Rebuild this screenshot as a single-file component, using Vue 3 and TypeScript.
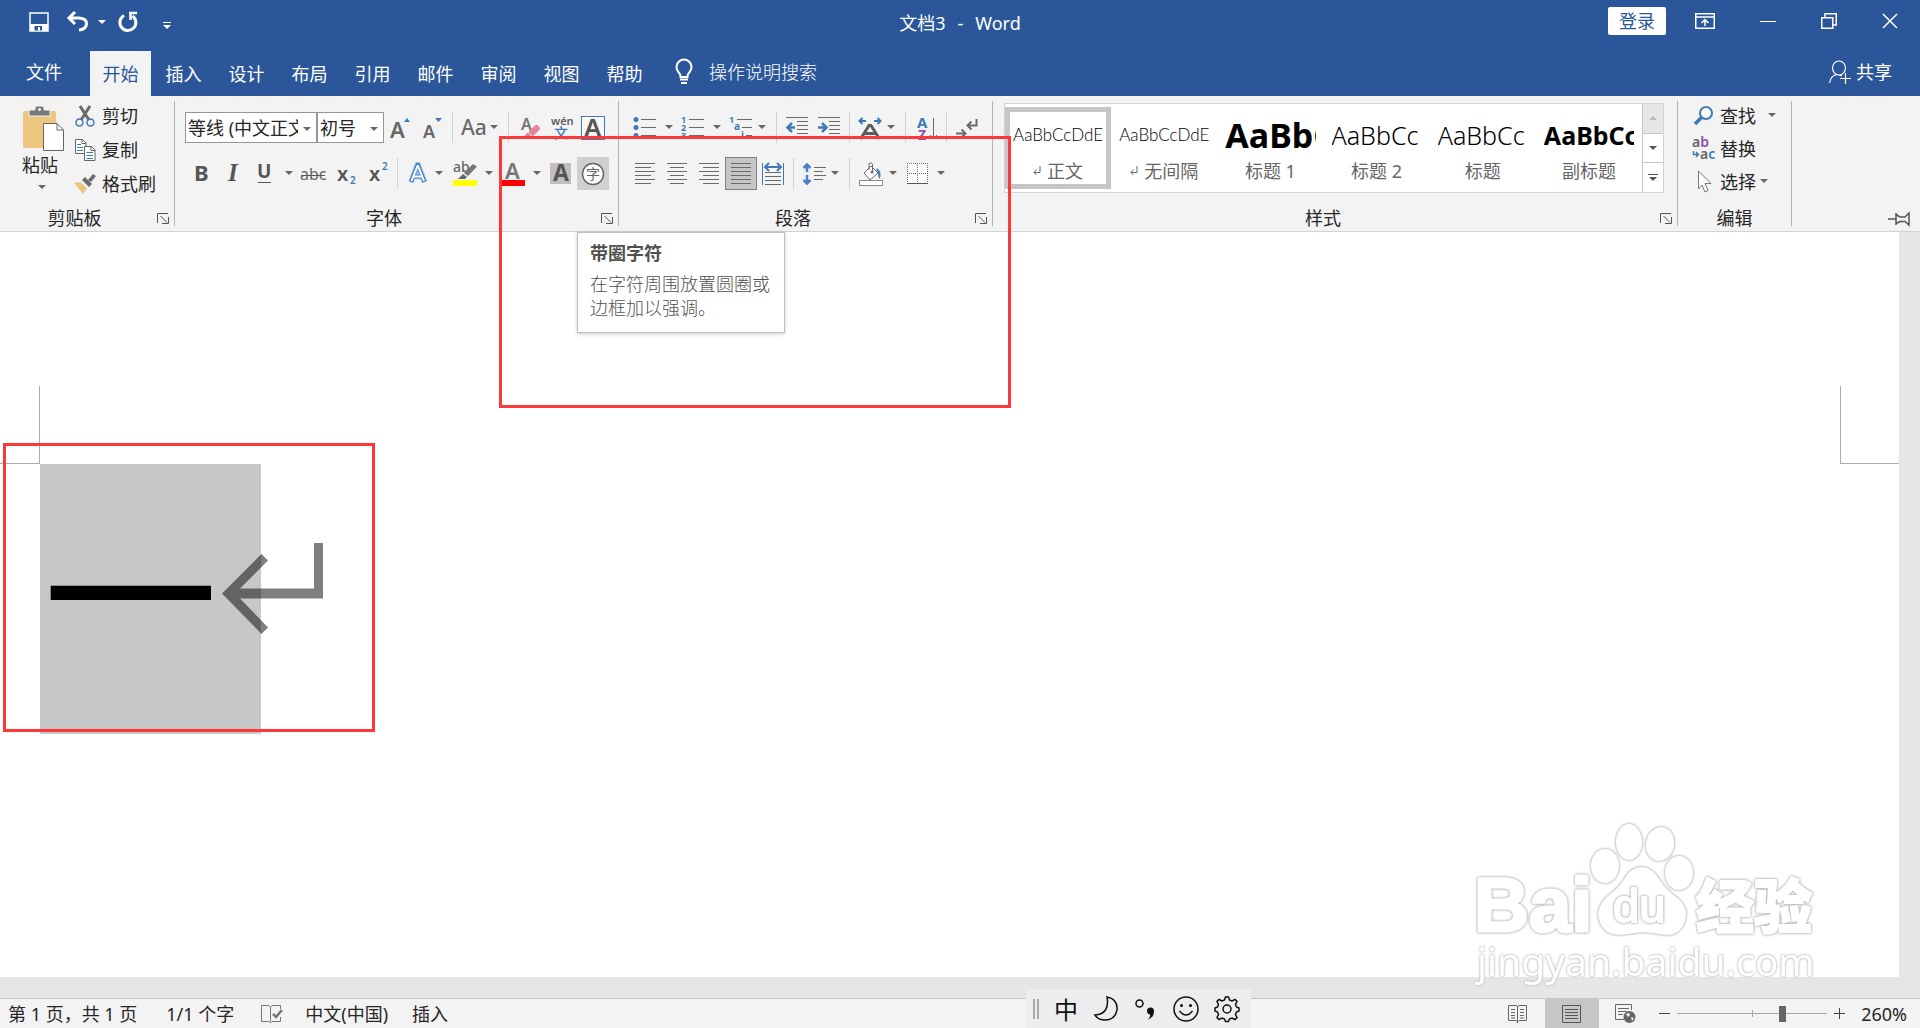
<script setup lang="ts">
import { ref } from 'vue'

interface Tool {
  kind: 'icon' | 'caret' | 'sep' | 'gap'
  w: number
  icon?: string
  label?: string
  state?: 'hover' | 'on'
}

const icon = (name: string, label: string, w = 32, state?: 'hover' | 'on'): Tool => ({ kind: 'icon', w, icon: name, label, state })
const caret = (w = 16): Tool => ({ kind: 'caret', w, label: '更多选项' })
const sep = (w: number): Tool => ({ kind: 'sep', w })
const gap = (w: number): Tool => ({ kind: 'gap', w })

const lines = (rows: number[][]): string =>
  `<path d="${rows.map(([x1, x2, y]) => `M${x1} ${y + 0.5}H${x2}`).join('')}" stroke="#6a6a6a" fill="none"/>`

const letter = (t: string, x: number, y: number, size: number, color = '#5c5c5c', weight = 700, family = 'Noto Sans'): string =>
  `<text x="${x}" y="${y}" font-size="${size}" fill="${color}" font-weight="${weight}" font-family="${family}, Noto Sans CJK SC, sans-serif">${t}</text>`

const blue = '#3f7ab6'

const icons: Record<string, string> = {
  grow: letter('A', 2, 22, 22, '#666', 600) + `<path d="M16 6H22L19 2Z" fill="${blue}"/>`,
  shrink: letter('A', 3, 22, 18, '#666', 600) + `<path d="M15 2H22L18.500 6Z" fill="${blue}"/>`,
  case: letter('Aa', 0, 19, 21, '#6a6a6a', 500),
  eraser: letter('A', 2, 14, 16, '#777', 600) + '<path d="M6 19L16 9.500Q18 8 19.500 10L21 12Q21.500 13 20.500 14L11.500 22.500H8.500L6 20Z" fill="#e68497"/><path d="M9 16l6 6" stroke="#f3f3f3"/>',
  pinyin: letter('wén', 2, 9, 11, '#5c5c5c', 600) + letter('文', 5, 22, 14, blue, 500),
  box: `<rect x=".5" y=".5" width="23" height="23" fill="#f8f8f8" stroke="${blue}"/>` + letter('A', 3, 21, 26, '#555', 600),
  bold: letter('B', 5, 19, 22, '#555'),
  italic: letter('<tspan font-style="italic">I</tspan>', 7, 19, 25, '#555', 700, 'Liberation Serif'),
  underline: letter('U', 4, 16, 19, '#555') + '<path d="M5 20.500H18" stroke="#555"/>',
  strike: letter('abc', -1, 18, 16, '#666', 400) + '<path d="M0 13.500H24" stroke="#555"/>',
  sub: letter('x', 4, 19, 20, '#555', 600) + letter('2', 17, 22, 10, blue, 600),
  sup: letter('x', 4, 19, 20, '#555', 600) + letter('2', 17, 8, 10, blue, 600),
  effect: '<path d="M6 20L12.500 3H13L19.500 20M8.500 14.500H17" fill="none" stroke="#a9cbef" stroke-width="6"/><path d="M6 20L12.500 3H13L19.500 20M8.500 14.500H17" fill="none" stroke="#3f7fc4" stroke-width="4"/><path d="M6.500 19L12.500 4H13L19 19M8.500 14.500H17" fill="none" stroke="#fff" stroke-width="2"/>',
  highlight: letter('ab', 0, 10, 14, '#666', 500) + '<path d="M20 2L24 4.500 15 14 11 11Z" fill="#777"/><path d="M10 12l4 3-2 2H5Z" fill="#666"/><rect y="18" width="24" height="6" fill="#ff0"/>',
  color: letter('A', 4, 17, 22, '#777', 600) + '<rect x="0" y="18" width="24" height="6" fill="#f00"/>',
  shade: '<rect x="1" y="1" width="21" height="21" fill="#bfbfbf"/>' + letter('A', 4, 19, 23, '#555'),
  circled: '<circle cx="12" cy="12" r="10.500" fill="#fff" stroke="#666" stroke-width="1.500"/>' + letter('字', 5, 17, 14, '#666', 400),
  bullets: `<g fill="${blue}"><circle cx="3" cy="3.500" r="2.500"/><circle cx="3" cy="11.500" r="2.500"/><circle cx="3" cy="19.500" r="2.500"/></g>` + lines([[8, 23, 3], [8, 23, 11], [8, 23, 19]]),
  numbers: letter('1', 0, 7, 9, blue) + letter('2', 0, 15, 9, blue) + letter('3', 0, 23, 9, blue) + lines([[8, 23, 3], [8, 23, 11], [8, 23, 19]]),
  multi: letter('1', 0, 7, 9, blue) + letter('a', 5, 14, 10, blue) + letter('i', 12, 23, 10, blue) + lines([[8, 23, 3], [13, 23, 11], [17, 23, 19]]),
  outdent: lines([[1, 23, 1], [12, 23, 5], [12, 23, 9], [12, 23, 13], [12, 23, 17]]) + `<path d="M10 11.500H3M7 7L2.500 11.500 7 16" fill="none" stroke="${blue}" stroke-width="2.500"/>`,
  indent: lines([[1, 23, 1], [12, 23, 5], [12, 23, 9], [12, 23, 13], [12, 23, 17]]) + `<path d="M1 11.500H8M5 7L9.500 11.500 5 16" fill="none" stroke="${blue}" stroke-width="2.500"/>`,
  wide: `<path d="M8 5H2M4.500 2L1.500 5 4.500 8M16 5H22M19.500 2L22.500 5 19.500 8" fill="none" stroke="${blue}" stroke-width="2"/><path d="M2.500 23L11 9.500H13L21.500 23M6.500 17.500H17.500" fill="none" stroke="#5c5c5c" stroke-width="3"/>`,
  sort: letter('A', 1, 12, 15, blue) + letter('Z', 2, 24, 14, '#8b50b0') + '<path d="M17.500 2V23M14 19l3.500 4 3.500-4" stroke="#6a6a6a" fill="none"/>',
  marks: '<path d="M21.500 3V9.500H13M16.500 5.500L12.500 9.500 16.500 13.500M1 17.500H10M6.500 13.500L10.500 17.500 6.500 21.500" fill="none" stroke="#6a6a6a" stroke-width="2"/>',
  left: lines([[2, 22, 1], [2, 18, 5], [2, 22, 9], [2, 18, 13], [2, 22, 17], [2, 18, 21]]),
  center: lines([[2, 22, 1], [5, 19, 5], [2, 22, 9], [5, 19, 13], [2, 22, 17], [5, 19, 21]]),
  right: lines([[2, 22, 1], [6, 22, 5], [2, 22, 9], [6, 22, 13], [2, 22, 17], [6, 22, 21]]),
  justify: lines([[2, 22, 1], [2, 22, 5], [2, 22, 9], [2, 22, 13], [2, 22, 17], [2, 22, 21]]),
  distribute: `<path d="M1.500 1V23M22.500 1V23" stroke="${blue}"/><path d="M4 5H20M8 1L4 5 8 9M16 1L20 5 16 9" fill="none" stroke="${blue}" stroke-width="2"/>` + lines([[4, 20, 10], [4, 20, 14], [4, 20, 18], [4, 20, 22]]),
  spacing: '<path d="M5 10V3M1.500 6L5 2.500 8.500 6M5 13V21M1.500 18L5 21.500 8.500 18" fill="none" stroke="#4a7fc8" stroke-width="2.500"/>' + lines([[12, 24, 5], [12, 21, 9], [12, 24, 13], [12, 21, 17]]),
  bucket: '<rect x=".5" y="18.500" width="23" height="5" fill="#fff" stroke="#8a8a8a"/><path d="M5 11L12 4 19 11 11 18Z" fill="#fff" stroke="#6a6a6a"/><path d="M10 8V1.500Q12 0 13.500 2V10" fill="none" stroke="#6a6a6a"/><circle cx="13" cy="10" r="1.500" fill="#6a6a6a"/><path d="M17 6Q23 8 21 17Q19 15 19 11Z" fill="#3f7ab6"/>',
  borders: '<rect x="1" y="1" width="21" height="21" fill="#fff"/><path d="M1.500 1V21M11.500 1V21M21.500 1V21M1 1.500H22M1 11.500H22" stroke="#6a6a6a" stroke-dasharray="1 1"/><path d="M1 21.500H22" stroke="#555"/>',
}

const fontRow1: Tool[] = [icon('grow', '增大字号'), icon('shrink', '减小字号'), sep(9), icon('case', '更改大小写'), caret(10), sep(18), icon('eraser', '清除所有格式', 28), icon('pinyin', '拼音指南'), icon('box', '字符边框')]
const fontRow2: Tool[] = [icon('bold', '加粗'), icon('italic', '倾斜'), icon('underline', '下划线'), caret(), icon('strike', '删除线'), icon('sub', '下标'), icon('sup', '上标'), sep(8), icon('effect', '文本效果'), caret(12), gap(4), icon('highlight', '突出显示'), caret(), icon('color', '字体颜色'), caret(), icon('shade', '字符底纹'), icon('circled', '带圈字符', 32, 'hover')]
const paraRow1: Tool[] = [icon('bullets', '项目符号'), caret(), icon('numbers', '编号'), caret(), icon('multi', '多级列表'), caret(10), sep(18), icon('outdent', '减少缩进量', 24), gap(4), icon('indent', '增加缩进量'), sep(8), icon('wide', '中文版式', 34), caret(8), sep(20), icon('sort', '排序', 26), sep(10), icon('marks', '显示编辑标记')]
const paraRow2: Tool[] = [icon('left', '左对齐'), icon('center', '居中'), icon('right', '右对齐'), icon('justify', '两端对齐', 32, 'on'), icon('distribute', '分散对齐'), sep(8), icon('spacing', '行距', 34), caret(8), sep(20), icon('bucket', '底纹', 24), caret(20), icon('borders', '边框', 30), caret()]

const groups = [
  { name: '字体', cls: 'font', rows: [fontRow1, fontRow2] },
  { name: '段落', cls: 'para', rows: [paraRow1, paraRow2] },
]

const tabs = ['开始', '插入', '设计', '布局', '引用', '邮件', '审阅', '视图', '帮助']
const activeTab = ref('开始')

const styles = [
  { sample: 'AaBbCcDdE', name: '正文', mark: true, size: 's' },
  { sample: 'AaBbCcDdE', name: '无间隔', mark: true, size: 's' },
  { sample: 'AaBbC', name: '标题 1', mark: false, size: 'xl' },
  { sample: 'AaBbCc', name: '标题 2', mark: false, size: 'm' },
  { sample: 'AaBbCc', name: '标题', mark: false, size: 'm' },
  { sample: 'AaBbCc', name: '副标题', mark: false, size: 'b' },
]
const activeStyle = ref(0)
const zoom = ref(71)
</script>

<template>
  <div class="app">
    <header class="titlebar">
      <div class="quick">
        <button class="q save" aria-label="保存"><svg width="20" height="20" viewBox="0 0 20 20"><path d="M1 1H19V19H1Z" fill="none" stroke="#fff" stroke-width="1.500" /><path d="M1 12H19V19H1Z" fill="#fff" /><path d="M5.500 14H13V18.500H5.500Z" fill="#2b579a" /><path d="M9 15H11V18.500H9Z" fill="#fff" /></svg></button>
        <button class="q undo" aria-label="撤消"><svg width="24" height="22" viewBox="0 0 24 22"><path d="M9 1L3 7 9 13M3.500 7H13Q21 7.500 20.500 13Q20 18.500 13 19" fill="none" stroke="#fff" stroke-width="3" /></svg></button>
        <button class="q drop" aria-label="撤消列表"><svg width="8" height="5" viewBox="0 0 8 5"><path d="M0 0H8L4 4Z" fill="#fff" /></svg></button>
        <button class="q redo" aria-label="重复"><svg width="22" height="22" viewBox="0 0 22 22"><path d="M7 4.500A8 8 0 1 0 15.500 5" fill="none" stroke="#fff" stroke-width="3" /><path d="M12 2H20M13.500 1V9" fill="none" stroke="#fff" stroke-width="2.500" /></svg></button>
        <button class="q more" aria-label="自定义快速访问工具栏"><svg width="8" height="8" viewBox="0 0 8 8"><path d="M0 .5H8" stroke="#fff" /><path d="M0 3H8L4 7Z" fill="#fff" /></svg></button>
      </div>
      <h1><span>文档3</span><span>-</span><span>Word</span></h1>
      <div class="window">
        <button class="login">登录</button>
        <button class="w opts" aria-label="功能区显示选项"><svg width="20" height="16" viewBox="0 0 20 16"><path d="M.75 .75H19.250V15.250H.75ZM1 4H19M10 13V7M6.500 10L10 6.500 13.500 10" fill="none" stroke="#fff" stroke-width="1.500" /></svg></button>
        <button class="w" aria-label="最小化"><svg width="16" height="16" viewBox="0 0 16 16"><path d="M0 8.500H16" stroke="#fff" /></svg></button>
        <button class="w" aria-label="还原"><svg width="16" height="16" viewBox="0 0 16 16"><path d="M.75 4.750H11.750V15.250H.75ZM4 4V.75H15.250V12H12" fill="none" stroke="#fff" stroke-width="1.500" /></svg></button>
        <button class="w" aria-label="关闭"><svg width="16" height="16" viewBox="0 0 16 16"><path d="M1 1L15 15M15 1L1 15" stroke="#fff" stroke-width="1.500" /></svg></button>
      </div>
    </header>

    <nav class="tabs">
      <button class="file">文件</button>
      <button v-for="t in tabs" :key="t" class="tab" :class="{ active: t === activeTab }" @click="activeTab = t">{{ t }}</button>
      <button class="tell">
        <svg width="18" height="26" viewBox="0 0 18 26"><path d="M5.500 18Q5.500 15 3 12.500A7.500 7.500 0 1 1 15 12.500Q12.500 15 12.500 18ZM5 20.500H13M6 24H12" fill="none" stroke="#fff" stroke-width="2" /></svg>
        <span>操作说明搜索</span>
      </button>
      <button class="share">
        <svg width="24" height="24" viewBox="0 0 24 24"><path d="M11 1A6.500 7 0 1 0 11 15A6.500 7 0 1 0 11 1M1.500 23Q3 15 9 14.500L14 16M12 18.500H23M17.500 13V24" fill="none" stroke="#fff" stroke-width="1.200" /></svg>
        <span>共享</span>
      </button>
    </nav>

    <section class="ribbon">
      <div class="group clip">
        <div class="clip-body">
          <button class="paste">
            <svg width="42" height="46" viewBox="0 0 42 46"><path d="M0 7Q0 5 2 5H31Q33 5 33 7V42H2Q0 42 0 40Z" fill="#ecc57f" /><path d="M6 4H12V2Q12 0 14 0H19Q21 0 21 2V4H27V10H6Z" fill="#777" stroke="#f3f3f3" /><circle cx="16.500" cy="3.500" r="1.500" fill="#f3f3f3" /><path d="M20.500 17.500H34L40.500 24V44.500H20.500Z" fill="#fff" stroke="#666" /><path d="M34 17.500V24H40.500" fill="none" stroke="#666" /></svg>
            <span>粘贴</span>
            <svg width="8" height="5" viewBox="0 0 8 5"><path d="M0 0H8L4 4Z" fill="#666" /></svg>
          </button>
          <div class="clip-list">
            <button><svg width="22" height="24" viewBox="0 0 22 24"><path d="M6 2L15 16M16 2L7 16" stroke="#6a6a6a" stroke-width="3" /><circle cx="5.500" cy="18.500" r="3.500" fill="none" stroke="#3f7ab6" stroke-width="1.500" /><circle cx="16.500" cy="18.500" r="3.500" fill="none" stroke="#3f7ab6" stroke-width="1.500" /></svg><span>剪切</span></button>
            <button><svg width="22" height="24" viewBox="0 0 22 24"><path d="M1.500 1.500H8.500L12 5V15.500H1.500Z" fill="#fff" stroke="#666" /><path d="M10.500 8.500H17.500L21 12V22.500H10.500Z" fill="#fff" stroke="#666" /><path d="M8 1.500V5.500H12M17 8.500V12.500H21" fill="none" stroke="#666" /><path d="M3 6.500H7M3 9.500H9M3 12.500H9M12.500 14.500H19M12.500 17.500H19M12.500 20.500H19" stroke="#3f7ab6" /></svg><span>复制</span></button>
            <button><svg width="22" height="24" viewBox="0 0 22 24"><path d="M0 11L6 10 13 16 9 22Z" fill="#ecc57f" /><path d="M8 8L11 5 18 12 15 15Z" fill="#6a6a6a" /><path d="M14 8L19 2 22 4 17 10Z" fill="#6a6a6a" /></svg><span>格式刷</span></button>
          </div>
        </div>
        <div class="caption"><span>剪贴板</span><button class="launch" aria-label="剪贴板设置"><svg width="12" height="11" viewBox="0 0 12 11"><path d="M.5 10V.5H11M3.500 3L10 9.500M11.500 4V10.500H5" fill="none" stroke="#555" /></svg></button></div>
      </div>

      <div v-for="g in groups" :key="g.name" class="group" :class="g.cls">
        <div v-for="(row, ri) in g.rows" :key="ri" class="row">
          <template v-if="g.cls === 'font' && ri === 0">
            <label class="combo name"><select aria-label="字体"><option>等线 (中文正文)</option></select><svg width="8" height="5" viewBox="0 0 8 5"><path d="M0 0H8L4 4Z" fill="#666" /></svg></label>
            <label class="combo size"><select aria-label="字号"><option>初号</option></select><svg width="8" height="5" viewBox="0 0 8 5"><path d="M0 0H8L4 4Z" fill="#666" /></svg></label>
          </template>
          <template v-for="(t, i) in row" :key="i">
            <button v-if="t.kind === 'icon'" class="tool" :class="t.state" :style="{ width: t.w + 'px' }" :aria-label="t.label"><svg width="24" height="24" viewBox="0 0 24 24" v-html="icons[t.icon!]"></svg></button>
            <button v-else-if="t.kind === 'caret'" class="tool" :style="{ width: t.w + 'px' }" :aria-label="t.label"><svg width="8" height="5" viewBox="0 0 8 5"><path d="M0 0H8L4 4Z" fill="#666" /></svg></button>
            <span v-else class="space" :class="t.kind" :style="{ width: t.w + 'px' }"></span>
          </template>
        </div>
        <div class="caption"><span>{{ g.name }}</span><button class="launch" :aria-label="g.name + '设置'"><svg width="12" height="11" viewBox="0 0 12 11"><path d="M.5 10V.5H11M3.500 3L10 9.500M11.500 4V10.500H5" fill="none" stroke="#555" /></svg></button></div>
      </div>

      <div class="group styles">
        <div class="gallery">
          <button v-for="(s, i) in styles" :key="i" class="style" :class="{ chosen: i === activeStyle }" @click="activeStyle = i">
            <span class="sample" :class="s.size">{{ s.sample }}</span>
            <span class="style-name"><svg v-if="s.mark" width="8" height="10" viewBox="0 0 8 10"><path d="M7 0V6.500H1M3.500 3.500L1 6.500 3.500 9" fill="none" stroke="#666" /></svg>{{ s.name }}</span>
          </button>
          <div class="scroll">
            <button class="off" aria-label="上一行"><svg width="8" height="5" viewBox="0 0 8 5"><path d="M0 4H8L4 0Z" fill="#bbb" /></svg></button>
            <button aria-label="下一行"><svg width="8" height="5" viewBox="0 0 8 5"><path d="M0 0H8L4 4Z" fill="#555" /></svg></button>
            <button aria-label="其他样式"><svg width="10" height="8" viewBox="0 0 10 8"><path d="M0 .5H10" stroke="#555" /><path d="M1 3H9L5 7Z" fill="#555" /></svg></button>
          </div>
        </div>
        <div class="caption"><span>样式</span><button class="launch" aria-label="样式设置"><svg width="12" height="11" viewBox="0 0 12 11"><path d="M.5 10V.5H11M3.500 3L10 9.500M11.500 4V10.500H5" fill="none" stroke="#555" /></svg></button></div>
      </div>

      <div class="group edit">
        <div class="edit-list">
          <button><svg width="24" height="24" viewBox="0 0 24 24"><circle cx="14" cy="9" r="6" fill="#fff" stroke="#3f7ab6" stroke-width="2" /><path d="M10 13L3 20" stroke="#3f7ab6" stroke-width="3.500" /></svg><span>查找</span><svg class="far" width="8" height="5" viewBox="0 0 8 5"><path d="M0 0H8L4 4Z" fill="#666" /></svg></button>
          <button><svg width="24" height="24" viewBox="0 0 24 24"><g font-family="Noto Sans, sans-serif" font-size="14" font-weight="600"><text x="0" y="10" fill="#666">a<tspan fill="#8b50b0">b</tspan></text><text x="8" y="22" fill="#666">a<tspan fill="#3f7ab6">c</tspan></text></g><path d="M1.500 14V17.500H6M4 15L6.500 17.500 4 20" fill="none" stroke="#3f7ab6" stroke-width="1.500" /></svg><span>替换</span></button>
          <button><svg width="24" height="24" viewBox="0 0 24 24"><path d="M6.500 1L19 13.500H13L16 20.500 13 22 10 15 6.500 19Z" fill="#fff" stroke="#777" /></svg><span>选择</span><svg width="8" height="5" viewBox="0 0 8 5"><path d="M0 0H8L4 4Z" fill="#666" /></svg></button>
        </div>
        <div class="caption"><span>编辑</span></div>
      </div>
      <button class="pin" aria-label="固定功能区"><svg width="22" height="14" viewBox="0 0 22 14"><path d="M0 7H8M8 1V13M8 2.500L12 5H17L21 1V13L17 9.500H12L8 11.500" fill="none" stroke="#555" stroke-width="1.500" /></svg></button>
    </section>

    <main class="desk">
      <article class="page">
        <div class="corners"><i class="corner"></i><i class="corner end"></i></div>
        <div class="line">
          <span class="selected">一</span>
          <svg class="mark" width="102" height="92" viewBox="0 0 102 92"><path d="M0 50.500L39.500 11 46 17.500 18 45.500H92V0H101V55.500H18L46 84.500 39.500 91Z" fill="#000" fill-opacity=".5" /></svg>
        </div>
      </article>
    </main>

    <footer class="status">
      <span class="pages">第 1 页，共 1 页</span>
      <span class="words">1/1 个字</span>
      <svg class="proof" width="22" height="18" viewBox="0 0 22 18"><path d="M9.500 16.500V2L8 .5H.5V16.500H8L9.500 18L11 16.500H19.500V12M9.500 2L11 .5H19.500V4" fill="none" stroke="#777" /><path d="M12 9L15 12 21 5" fill="none" stroke="#777" stroke-width="2.500" /></svg>
      <span class="lang">中文(中国)</span>
      <span class="mode">插入</span>
      <div class="views">
        <button aria-label="阅读视图"><svg width="20" height="18" viewBox="0 0 20 18"><path d="M9.500 1V18M9.500 1.500L8 .5H.5V15.500H8L9.500 17 11 15.500H18.500V.5H11Z" fill="none" stroke="#666" /><path d="M3 4.500H7M3 7.500H7M3 10.500H7M3 13H7M12 4.500H16M12 7.500H16M12 10.500H16M12 13H16" stroke="#666" /></svg></button>
        <button class="on" aria-label="页面视图"><svg width="20" height="18" viewBox="0 0 20 18"><path d="M.5 .5H18.500V17.500H.5ZM3 4.500H16M3 7.500H16M3 10.500H16M3 13.500H16" fill="none" stroke="#555" /></svg></button>
        <button aria-label="Web 版式视图"><svg width="22" height="20" viewBox="0 0 22 20"><path d="M9 15.500H.5V.5H16.500V6M3 4.500H14M3 7.500H12M3 10.500H8" fill="none" stroke="#666" /><circle cx="14.500" cy="13" r="6" fill="#666" /><path d="M11 10l3-1 1 2-2 2zM16 13l3 1-2 3z" fill="#f3f3f3" /></svg></button>
      </div>
      <div class="zoom">
        <button aria-label="缩小"><svg width="13" height="13" viewBox="0 0 13 13"><path d="M1 6.500H12" stroke="#444" /></svg></button>
        <input v-model="zoom" type="range" min="0" max="100" aria-label="缩放">
        <button aria-label="放大"><svg width="13" height="13" viewBox="0 0 13 13"><path d="M1 6.500H12M6.500 1V12" stroke="#444" /></svg></button>
        <output>260%</output>
      </div>
    </footer>

    <aside class="tip"><b>带圈字符</b><p>在字符周围放置圆圈或边框加以强调。</p></aside>
    <div class="frame upper"></div>
    <div class="frame lower"></div>

    <svg class="watermark" width="350" height="176" viewBox="0 0 350 176" aria-label="Baidu 经验">
      <g fill="#fff" stroke="#fff" stroke-width="2" stroke-linejoin="round">
        <text class="glow" x="0" y="110" font-family="Liberation Sans, sans-serif" font-size="76" font-weight="700" stroke-width="3">Bai</text>
        <g class="glow">
          <ellipse cx="131" cy="45" rx="13" ry="16" /><ellipse cx="155" cy="21" rx="12" ry="17" /><ellipse cx="186" cy="23" rx="13" ry="16" transform="rotate(12 186 23)" /><ellipse cx="205" cy="52" rx="13" ry="16" />
          <path d="M168 47Q178 47 186 61Q192 70 202 77Q212 85 211 95Q208 113 192 113Q180 111 168 110Q156 112 144 113Q127 112 125 93Q126 81 139 72Q148 65 154 54Q160 47 168 47Z" />
        </g>
        <text class="glow" x="139" y="101" font-family="Liberation Sans, sans-serif" font-size="47">du</text>
        <text class="glow" x="222" y="107" font-family="Noto Sans CJK SC, sans-serif" font-size="58" font-weight="900">经验</text>
        <text class="glow thin" x="3" y="155" font-family="Noto Sans, sans-serif" font-size="39" stroke-width="0">jingyan.baidu.com</text>
      </g>
    </svg>

    <div class="ime">
      <i class="grip"></i>
      <span>中</span>
      <svg width="26" height="26" viewBox="0 0 26 26"><path d="M14 1Q25 3 24 14Q22 24 12 24Q5 24 2 19Q17 18 14 1Z" fill="none" stroke="#111" stroke-width="1.500" /></svg>
      <svg width="24" height="26" viewBox="0 0 24 26"><circle cx="5.500" cy="7.500" r="3.500" fill="none" stroke="#111" stroke-width="1.500" /><path d="M13 15a3.500 3.500 0 1 1 7 0Q20 22 13 24Q17 21 16 18.500Q13 18 13 15Z" fill="#111" /></svg>
      <svg width="26" height="26" viewBox="0 0 26 26"><circle cx="13" cy="13" r="12" fill="none" stroke="#111" stroke-width="1.500" /><circle cx="8.500" cy="9.500" r="1.500" /><circle cx="17.500" cy="9.500" r="1.500" /><path d="M6.500 15Q13 23 19.500 15" fill="none" stroke="#111" stroke-width="1.500" /></svg>
      <svg width="26" height="26" viewBox="0 0 26 26"><path d="M10.500 4l1-3h3l1 3 2.500 1 3-1.500 2 2-1.500 3 1 2.500 2.500 1v3l-2.500 1-1 2.500 1.500 3-2 2-3-1.500-2.500 1-1 2.500h-3l-1-2.500-2.500-1-3 1.500-2-2 1.500-3-1-2.500-2.500-1v-3l2.500-1 1-2.500-1.500-3 2-2 3 1.500Z" fill="none" stroke="#111" stroke-width="1.500" /><circle cx="13" cy="13" r="4" fill="none" stroke="#111" stroke-width="1.500" /></svg>
    </div>
  </div>
</template>

<style>
body {
  margin: 0;
}
</style>

<style scoped>
.app {
  position: relative;
  display: flex;
  flex-direction: column;
  min-height: 100vh;
  overflow: hidden;
  background: #fff;
  color: #262626;
  font: 18px/26px 'Noto Sans', 'Noto Sans CJK SC', sans-serif;
}
button,
select {
  margin: 0;
  padding: 0;
  border: 0;
  background: none;
  color: inherit;
  font: inherit;
}
svg {
  display: block;
  flex: none;
  overflow: visible;
}

/* title bar */
.titlebar {
  display: grid;
  grid-template-columns: 1fr auto 1fr;
  height: 51px;
  background: #2b579a;
  color: #fff;
}
.quick {
  display: flex;
  align-items: center;
  height: 44px;
  padding-left: 29px;
}
.q {
  display: flex;
  align-items: center;
}
.undo {
  margin-left: 17px;
}
.drop {
  margin-left: 8px;
}
.redo {
  margin-left: 11px;
}
.more {
  margin: 8px 0 0 24px;
}
h1 {
  display: flex;
  gap: 12px;
  margin: 10px 0 0;
  font-size: 18px;
  line-height: 26px;
  font-weight: 400;
}
.window {
  display: flex;
  justify-content: flex-end;
  align-items: center;
  height: 42px;
}
.login {
  width: 58px;
  height: 28px;
  border-radius: 2px;
  background: #fff;
  color: #2b579a;
}
.w {
  display: flex;
  justify-content: center;
  box-sizing: border-box;
  width: 61px;
}
.opts {
  width: 71px;
  padding-left: 7px;
}

/* tab strip */
.tabs {
  display: flex;
  gap: 2px;
  height: 45px;
  background: #2b579a;
  color: #fff;
}
.file {
  width: 88px;
  padding: 0 0 4px;
}
.tab {
  width: 61px;
}
.tab.active {
  background: #f3f3f3;
  color: #2b579a;
}
.tell,
.share {
  display: flex;
  align-items: center;
  padding-bottom: 4px;
}
.tell {
  gap: 16px;
  margin-left: 18px;
  font-weight: 300;
}
.share {
  gap: 4px;
  margin-left: auto;
  padding-right: 28px;
}

/* ribbon */
.ribbon {
  display: flex;
  box-sizing: border-box;
  height: 136px;
  padding: 5px 0;
  border-bottom: 1px solid #d2d2d2;
  background: #f3f3f3;
}
.group {
  display: flex;
  flex-direction: column;
  box-sizing: border-box;
  flex: none;
  border-right: 1px solid #b5b5b5;
}
.caption {
  display: flex;
  flex: none;
  align-items: center;
  height: 26px;
  margin-top: auto;
  margin-bottom: -5px;
}
.caption span {
  flex: 1;
  padding-right: 8px;
  text-align: center;
}
.launch {
  margin-right: 5px;
}
.clip {
  width: 175px;
}
.clip-body {
  display: flex;
  height: 94px;
}
.paste {
  display: flex;
  flex-direction: column;
  align-items: center;
  width: 64px;
  margin-left: 12px;
  padding-top: 5px;
}
.paste span {
  margin: 0 8px 7px 0;
}
.paste svg:last-child {
  margin-right: 4px;
}
.clip-list {
  margin: -2px 0 0 -2px;
}
.clip-list button {
  display: flex;
  align-items: center;
  gap: 6px;
  height: 34px;
}
.font {
  width: 444px;
  padding-left: 10px;
}
.para {
  width: 374px;
  padding-left: 10px;
}
.font .caption,
.para .caption,
.styles .caption {
  margin-left: -10px;
}
.row {
  display: flex;
  flex: none;
  align-items: center;
  height: 33px;
  margin-top: 10px;
}
.row + .row {
  margin-top: 13px;
}
.tool {
  display: flex;
  flex: none;
  align-items: center;
  justify-content: center;
  height: 33px;
}
.tool.hover {
  background: #d0d0d0;
}
.tool.on {
  background: #c5c5c5;
  box-shadow: inset 0 0 0 1px #808080;
}
.space {
  display: flex;
  flex: none;
  justify-content: center;
}
.sep::before {
  width: 1px;
  height: 31px;
  background: #d2d2d2;
  content: '';
}
.combo {
  position: relative;
  flex: none;
  box-sizing: border-box;
  height: 31px;
  border: 1px solid #969696;
  background: #fff;
}
.combo select {
  width: 100%;
  height: 29px;
  padding: 0 18px 0 2px;
  appearance: none;
}
.combo svg {
  position: absolute;
  top: 14px;
  right: 5px;
}
.name {
  width: 132px;
}
.size {
  width: 67px;
}
.styles {
  flex: 1;
  min-width: 0;
  padding-left: 11px;
}
.gallery {
  display: flex;
  box-sizing: border-box;
  height: 90px;
  margin: 2px 13px 0 0;
  border: 1px solid #d2d2d2;
  background: #fff;
}
.style {
  box-sizing: border-box;
  flex: 1;
  min-width: 0;
  height: 82px;
  margin-top: 3px;
  padding: 0 3px;
  border: 5px solid transparent;
  color: #000;
}
.style.chosen {
  border-color: #c6c6c6;
}
.sample {
  display: block;
  height: 45px;
  overflow: hidden;
  line-height: 44px;
  text-align: left;
  white-space: nowrap;
}
.s {
  font-family: Lato, sans-serif;
  font-size: 17px;
  font-weight: 300;
}
.m {
  font-size: 25px;
  font-weight: 300;
}
.b {
  font-size: 25px;
  font-weight: 700;
}
.xl {
  font-size: 34px;
  font-weight: 700;
}
.style-name {
  display: flex;
  align-items: center;
  justify-content: center;
  gap: 6px;
  color: #666;
}
.scroll {
  display: flex;
  flex-direction: column;
  width: 20px;
  border-left: 1px solid #c6c6c6;
}
.scroll button {
  display: flex;
  flex: 1;
  align-items: center;
  justify-content: center;
}
.scroll button + button {
  border-top: 1px solid #c6c6c6;
}
.scroll .off {
  background: #e6e6e6;
}
.edit {
  width: 114px;
}
.edit-list {
  margin-top: -2px;
  padding-left: 14px;
}
.edit-list button {
  display: flex;
  align-items: center;
  gap: 4px;
  height: 33px;
}
.far {
  margin-left: 8px;
}
.edit .caption span {
  padding-right: 0;
}
.pin {
  align-self: flex-end;
  margin: 0 10px 0 96px;
}

/* document */
.desk {
  display: flex;
  flex: 1;
  padding: 0 21px 21px 0;
  background: #e6e6e6;
}
.page {
  flex: 1;
  background: #fff;
}
.corners {
  display: flex;
  justify-content: space-between;
  padding-top: 154px;
}
.corner {
  box-sizing: border-box;
  width: 40px;
  height: 78px;
  border: solid #ababab;
  border-width: 0 1px 1px 0;
}
.corner.end {
  width: 59px;
  border-width: 0 0 1px 1px;
}
.line {
  display: flex;
  padding-left: 40px;
}
.selected {
  box-sizing: border-box;
  width: 221px;
  height: 270px;
  padding-left: 3px;
  background: #c7c7c7;
  color: #000;
  font: 175px/242px 'Noto Sans CJK SC', sans-serif;
}
.mark {
  margin: 79px 0 0 -39px;
}

/* status bar */
.status {
  display: flex;
  align-items: center;
  box-sizing: border-box;
  height: 30px;
  padding-left: 8px;
  border-top: 1px solid #c6c6c6;
  background: #f3f3f3;
  white-space: nowrap;
}
.words {
  margin-left: 29px;
}
.proof {
  margin-left: 27px;
}
.lang {
  margin-left: 22px;
}
.mode {
  margin-left: 24px;
}
.views {
  display: flex;
  align-self: stretch;
  margin: 0 5px 0 auto;
}
.views button {
  display: flex;
  align-items: center;
  justify-content: center;
  width: 54px;
}
.views .on {
  background: #c6c6c6;
}
.zoom {
  display: flex;
  align-items: center;
  padding-right: 13px;
}
.zoom button {
  width: 13px;
}
.zoom input {
  width: 150px;
  height: 16px;
  margin: 0 6px;
  appearance: none;
  background: linear-gradient(#a6a6a6, #a6a6a6) center / 1px 7px no-repeat, linear-gradient(#a6a6a6, #a6a6a6) center / 100% 1px no-repeat;
}
.zoom input::-webkit-slider-thumb {
  width: 7px;
  height: 16px;
  appearance: none;
  background: #666;
}
.zoom output {
  margin-left: 15px;
}

/* floating layers */
.tip {
  position: absolute;
  top: 232px;
  left: 577px;
  box-sizing: border-box;
  width: 208px;
  height: 101px;
  padding: 8px 12px;
  border: 1px solid #bebebe;
  background: #fff;
  box-shadow: 0 1px 4px rgba(0, 0, 0, 0.2);
  color: #505050;
  line-height: 24px;
}
.tip p {
  margin: 7px 0 0;
  font-weight: 300;
}
.frame {
  position: absolute;
  box-sizing: border-box;
  border: 3px solid #fc3838;
  pointer-events: none;
}
.upper {
  top: 136px;
  left: 499px;
  width: 512px;
  height: 272px;
}
.lower {
  top: 443px;
  left: 3px;
  width: 372px;
  height: 289px;
}
.watermark {
  position: absolute;
  right: 96px;
  bottom: 31px;
}
.glow {
  filter: drop-shadow(0 0 1px #b0b0b0) drop-shadow(0 0 1px #c8c8c8);
}
.glow.thin {
  filter: drop-shadow(0 0 1px #b8b8b8) drop-shadow(0 0 1px #d8d8d8);
}
.ime {
  position: absolute;
  bottom: 0;
  left: 1026px;
  display: flex;
  align-items: center;
  gap: 15px;
  box-sizing: border-box;
  width: 225px;
  height: 39px;
  padding-left: 7px;
  background: #ededed;
  color: #111;
}
.ime span {
  width: 24px;
  font: 24px/36px 'Noto Sans CJK SC', sans-serif;
}
.grip {
  width: 2px;
  height: 20px;
  border: solid #aaa;
  border-width: 0 2px;
}
</style>
